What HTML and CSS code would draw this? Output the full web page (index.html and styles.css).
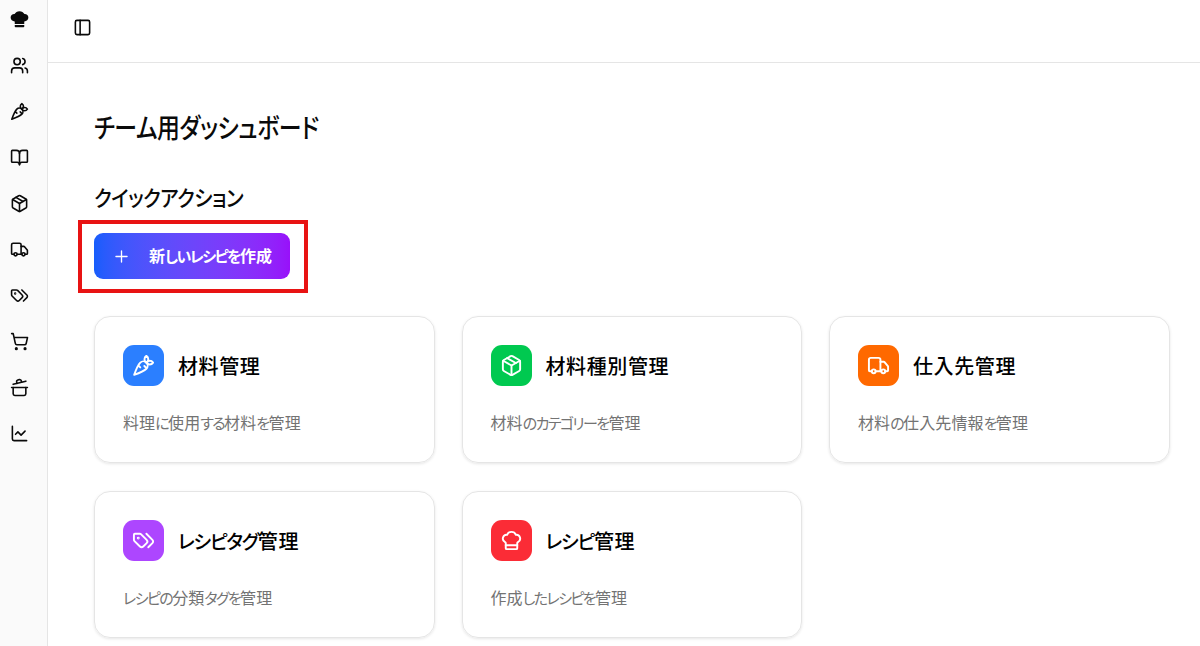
FILE: index.html
```html
<!DOCTYPE html>
<html lang="ja">

<head>
    <meta charset="UTF-8">
    <meta name="viewport" content="width=device-width, initial-scale=1.0">
    <title>チーム用ダッシュボード</title>
    <link rel="stylesheet" href="styles.css">
</head>

<body>
    <!-- アイコン定義 -->
    <svg class="icon-defs" xmlns="http://www.w3.org/2000/svg">
        <symbol id="logo" viewBox="0 0 24 24">
            <path d="M6 17.6v-3.2C3 14.4.8 12.3.8 9.6.8 6.8 3 5 5.8 5.2 7 3 9.2 1.6 12 1.6s5 1.4 6.2 3.6c2.8-.2 5 1.6 5 4.4 0 2.7-2.2 4.8-5.2 4.8v3.2z" />
            <path d="M6 19h12v1.8a1 1 0 0 1-1 1H7a1 1 0 0 1-1-1z" />
        </symbol>
        <symbol id="chef-hat" viewBox="0 0 24 24">
            <path d="M17 21a1 1 0 0 0 1-1v-5.35c0-.457.316-.844.727-1.041a4 4 0 0 0-2.134-7.589 5 5 0 0 0-9.186 0 4 4 0 0 0-2.134 7.588c.411.198.727.584.727 1.041V20a1 1 0 0 0 1 1Z" />
            <path d="M6 17h12" />
        </symbol>
        <symbol id="users" viewBox="0 0 24 24">
            <path d="M16 21v-2a4 4 0 0 0-4-4H6a4 4 0 0 0-4 4v2" />
            <circle cx="9" cy="7" r="4" />
            <path d="M22 21v-2a4 4 0 0 0-3-3.87" />
            <path d="M16 3.13a4 4 0 0 1 0 7.75" />
        </symbol>
        <symbol id="carrot" viewBox="0 0 24 24">
            <path d="M2.27 21.7s9.87-3.5 12.73-6.36a4.5 4.5 0 0 0-6.36-6.37C5.77 11.84 2.27 21.7 2.27 21.7zM8.64 14l-2.05-2.04M15.34 15l-2.46-2.46" />
            <path d="M22 9s-1.33-2-3.5-2C16.86 7 15 9 15 9s1.33 2 3.5 2S22 9 22 9z" />
            <path d="M15 2s-2 1.33-2 3.5S15 9 15 9s2-1.84 2-3.5C17 3.33 15 2 15 2z" />
        </symbol>
        <symbol id="book-open" viewBox="0 0 24 24">
            <path d="M12 7v14" />
            <path d="M3 18a1 1 0 0 1-1-1V4a1 1 0 0 1 1-1h5a4 4 0 0 1 4 4 4 4 0 0 1 4-4h5a1 1 0 0 1 1 1v13a1 1 0 0 1-1 1h-6a3 3 0 0 0-3 3 3 3 0 0 0-3-3z" />
        </symbol>
        <symbol id="package" viewBox="0 0 24 24">
            <path d="M11 21.73a2 2 0 0 0 2 0l7-4A2 2 0 0 0 21 16V8a2 2 0 0 0-1-1.73l-7-4a2 2 0 0 0-2 0l-7 4A2 2 0 0 0 3 8v8a2 2 0 0 0 1 1.73z" />
            <path d="M12 22V12" />
            <path d="M3.29 7 12 12l8.71-5" />
            <path d="m7.5 4.27 9 5.15" />
        </symbol>
        <symbol id="truck" viewBox="0 0 24 24">
            <path d="M14 18V6a2 2 0 0 0-2-2H4a2 2 0 0 0-2 2v11a1 1 0 0 0 1 1h2" />
            <path d="M15 18H9" />
            <path d="M19 18h2a1 1 0 0 0 1-1v-3.65a1 1 0 0 0-.22-.624l-3.48-4.35A1 1 0 0 0 17.52 8H14" />
            <circle cx="17" cy="18" r="2" />
            <circle cx="7" cy="18" r="2" />
        </symbol>
        <symbol id="tags" viewBox="0 0 24 24">
            <path d="m15 5 6.3 6.3a2.4 2.4 0 0 1 0 3.4L17 19" />
            <path d="M9.586 5.586A2 2 0 0 0 8.172 5H3a1 1 0 0 0-1 1v5.172a2 2 0 0 0 .586 1.414L8.29 18.29a2.426 2.426 0 0 0 3.42 0l3.58-3.58a2.426 2.426 0 0 0 0-3.42z" />
            <circle cx="6.5" cy="9.5" r=".5" />
        </symbol>
        <symbol id="cart" viewBox="0 0 24 24">
            <circle cx="8" cy="21" r="1" />
            <circle cx="19" cy="21" r="1" />
            <path d="M2.05 2.05h2l2.66 12.42a2 2 0 0 0 2 1.58h9.78a2 2 0 0 0 1.95-1.57l1.65-7.43H5.12" />
        </symbol>
        <symbol id="pot" viewBox="0 0 24 24">
            <path d="M2 12h20" />
            <path d="M20 12v8a2 2 0 0 1-2 2H6a2 2 0 0 1-2-2v-8" />
            <path d="m4 8 16-4" />
            <path d="m8.86 6.78-.45-1.81a2 2 0 0 1 1.45-2.43l1.94-.48a2 2 0 0 1 2.43 1.46l.45 1.8" />
        </symbol>
        <symbol id="chart" viewBox="0 0 24 24">
            <path d="M3 3v16a2 2 0 0 0 2 2h16" />
            <path d="m19 9-5 5-4-4-3 3" />
        </symbol>
        <symbol id="panel-left" viewBox="0 0 24 24">
            <rect x="3" y="3" width="18" height="18" rx="2" />
            <path d="M9 3v18" />
        </symbol>
        <symbol id="plus" viewBox="0 0 24 24">
            <path d="M5 12h14" />
            <path d="M12 5v14" />
        </symbol>
    </svg>

    <div class="layout">
        <nav class="sidebar">
            <a class="logo"><svg class="icon"><use href="#logo" /></svg></a>
            <a><svg class="icon"><use href="#users" /></svg></a>
            <a><svg class="icon"><use href="#carrot" /></svg></a>
            <a><svg class="icon"><use href="#book-open" /></svg></a>
            <a><svg class="icon"><use href="#package" /></svg></a>
            <a><svg class="icon"><use href="#truck" /></svg></a>
            <a><svg class="icon"><use href="#tags" /></svg></a>
            <a><svg class="icon"><use href="#cart" /></svg></a>
            <a><svg class="icon"><use href="#pot" /></svg></a>
            <a><svg class="icon"><use href="#chart" /></svg></a>
        </nav>

        <div class="main">
            <header class="topbar">
                <svg class="icon"><use href="#panel-left" /></svg>
            </header>

            <main class="content">
                <h1>チーム用ダッシュボード</h1>
                <h2>クイックアクション</h2>

                <div class="highlight">
                    <button type="button" class="create-btn">
                        <svg class="icon"><use href="#plus" /></svg>
                        <span>新<span class="kana">しいレシピを</span>作成</span>
                    </button>
                </div>

                <div class="cards">
                    <div class="card">
                        <div class="card-head">
                            <span class="badge blue"><svg class="icon"><use href="#carrot" /></svg></span>
                            <h3>材料管理</h3>
                        </div>
                        <p>料理<span class="kana">に</span>使用<span class="kana">する</span>材料<span class="kana">を</span>管理</p>
                    </div>
                    <div class="card">
                        <div class="card-head">
                            <span class="badge green"><svg class="icon"><use href="#package" /></svg></span>
                            <h3>材料種別管理</h3>
                        </div>
                        <p>材料<span class="kana">のカテゴリーを</span>管理</p>
                    </div>
                    <div class="card">
                        <div class="card-head">
                            <span class="badge orange"><svg class="icon"><use href="#truck" /></svg></span>
                            <h3>仕入先管理</h3>
                        </div>
                        <p>材料<span class="kana">の</span>仕入先情報<span class="kana">を</span>管理</p>
                    </div>
                    <div class="card">
                        <div class="card-head">
                            <span class="badge purple"><svg class="icon"><use href="#tags" /></svg></span>
                            <h3><span class="kana">レシピタグ</span>管理</h3>
                        </div>
                        <p><span class="kana">レシピの</span>分類<span class="kana">タグを</span>管理</p>
                    </div>
                    <div class="card">
                        <div class="card-head">
                            <span class="badge red"><svg class="icon"><use href="#chef-hat" /></svg></span>
                            <h3><span class="kana">レシピ</span>管理</h3>
                        </div>
                        <p>作成<span class="kana">したレシピを</span>管理</p>
                    </div>
                </div>
            </main>
        </div>
    </div>
</body>

</html>
```
FILE: styles.css
```css
* {
    box-sizing: border-box;
}

body {
    margin: 0;
    background: #fff;
    color: #0a0a0a;
    font-family: "Noto Sans CJK JP", sans-serif;
    font-feature-settings: "palt";
    overflow: hidden;
}

h1,
h2,
h3,
p {
    margin: 0;
}

.icon-defs {
    display: none;
}

.icon {
    display: block;
    flex: none;
    width: 19px;
    height: 19px;
    fill: none;
    stroke: currentColor;
    stroke-width: 2;
    stroke-linecap: round;
    stroke-linejoin: round;
}

.layout {
    display: flex;
    height: 646px;
}

/* サイドバー */
.sidebar {
    flex: none;
    width: 48px;
    padding: 10px 0 0 10px;
    background: #fafafa;
    border-right: 1px solid #e5e5e5;
    display: flex;
    flex-direction: column;
    gap: 27px;
}

.sidebar .logo .icon {
    fill: currentColor;
    stroke: none;
}

.main {
    flex: 1;
}

.topbar {
    height: 63px;
    padding: 18px 0 0 25px;
    border-bottom: 1px solid #e5e5e5;
}

.content {
    padding: 43px 30px 0 46px;
}

/* 見出しのかなを細めに */
h1,
h2 {
    width: max-content;
    font-weight: 500;
    letter-spacing: -0.5px;
    transform-origin: left;
}

h1 {
    font-size: 27px;
    line-height: 42px;
    transform: scaleX(0.848);
}

h2 {
    margin-top: 30px;
    font-size: 22px;
    line-height: 36px;
    transform: scaleX(0.893);
}

.kana {
    font-size: 15px;
    letter-spacing: -1.6px;
}

/* 新規作成ボタン */
.highlight {
    width: 230px;
    height: 73px;
    margin: 6px 0 0 -16px;
    padding: 9px 12px;
    border: 4px solid #e81313;
}

.create-btn {
    display: flex;
    align-items: center;
    gap: 18px;
    width: 196px;
    height: 46px;
    padding: 0 0 2px 18px;
    border: none;
    border-radius: 9px;
    background: linear-gradient(to right in oklab, #155dfc, #9810fa);
    color: #fff;
    font: inherit;
    font-size: 16px;
    font-weight: 700;
    white-space: nowrap;
}

.create-btn .icon {
    margin-top: 2px;
    stroke-width: 1.7;
}

/* カード */
.cards {
    display: grid;
    grid-template-columns: repeat(3, 340.5px);
    gap: 28px 27px;
    margin-top: 23px;
}

.card {
    height: 147px;
    padding: 28px;
    border: 1px solid #e5e5e5;
    border-radius: 16px;
    box-shadow: 0 1px 3px rgba(0, 0, 0, 0.1);
}

.card-head {
    display: flex;
    align-items: center;
    gap: 14px;
}

.badge {
    padding: 9px;
    border-radius: 11px;
    color: #fff;
}

.badge .icon {
    width: 23px;
    height: 23px;
}

.blue {
    background: #2b7fff;
}

.green {
    background: #00c950;
}

.orange {
    background: #ff6900;
}

.purple {
    background: #ad46ff;
}

.red {
    background: #fb2c36;
}

.card h3 {
    color: #000;
    font-size: 20px;
    font-weight: 500;
    line-height: 30px;
    letter-spacing: 0.6px;
}

.card h3 .kana {
    font-size: 19px;
    letter-spacing: -1.2px;
}

.card p {
    margin-top: 24px;
    color: #737373;
    font-size: 16px;
    line-height: 24px;
    letter-spacing: 0.1px;
}
```
